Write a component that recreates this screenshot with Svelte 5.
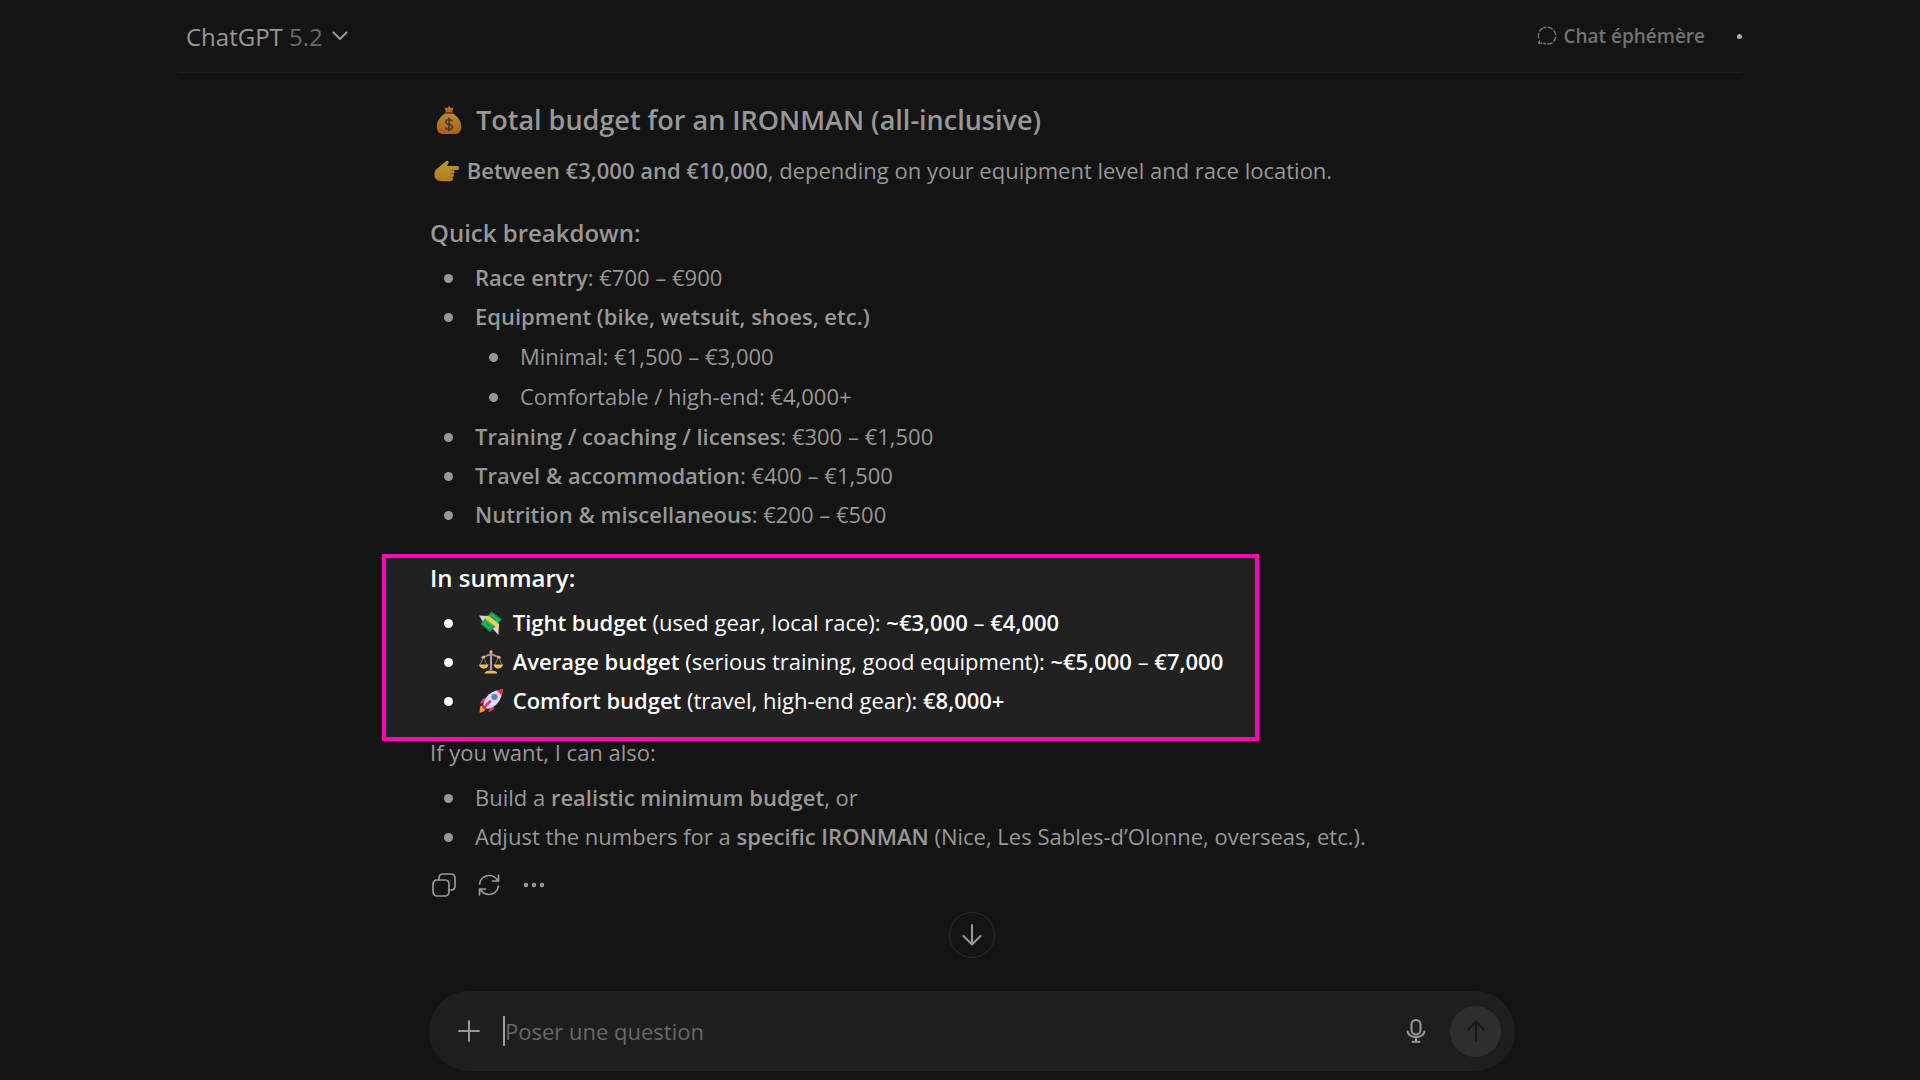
<script>
  const breakdown = [
    { label: "Race entry", value: "€700 – €900" },
    {
      label: "Equipment (bike, wetsuit, shoes, etc.)",
      items: ["Minimal: €1,500 – €3,000", "Comfortable / high-end: €4,000+"],
    },
    { label: "Training / coaching / licenses", value: "€300 – €1,500" },
    { label: "Travel & accommodation", value: "€400 – €1,500" },
    { label: "Nutrition & miscellaneous", value: "€200 – €500" },
  ];

  const summary = [
    { icon: "money", label: "Tight budget", note: "(used gear, local race)", from: "~€3,000", to: "€4,000" },
    { icon: "scales", label: "Average budget", note: "(serious training, good equipment)", from: "~€5,000", to: "€7,000" },
    { icon: "rocket", label: "Comfort budget", note: "(travel, high-end gear)", from: "€8,000+" },
  ];

  let question = "";
</script>

<div class="page">
  <header>
    <button class="model">
      <span>ChatGPT <span class="version">5.2</span></span>
      <svg width="16" height="10" viewBox="0 0 16 10" class="line"><path d="M1.500 1.500 8 8l6.500-6.500" /></svg>
    </button>
    <button class="temporary">
      <svg width="20" height="20" viewBox="0 0 20 20" class="line">
        <path d="M7 1.700 8.800 1.200M11.200 1.200Q13.500 1.500 15.200 2.900M17 4.800Q18.300 6.500 18.500 8.500M18.500 11.200Q18.200 13.500 17 15M15 16.800Q13 18 11 18M8.500 17.900 6.800 17.300M4.700 17 1.800 17.300 2.600 15M1.600 11.700Q1.100 9.500 1.600 7.500M2.700 5Q3.800 3.300 5.300 2.500" />
      </svg>
      Chat éphémère
    </button>
    <button class="more" aria-label="Options"><span class="dot"></span></button>
  </header>

  <main>
    <h2>
      <svg class="bag" width="26" height="30" viewBox="0 0 26 30" aria-hidden="true">
        <defs>
          <linearGradient id="bag" x2="0" y2="1"><stop stop-color="#b68f2b" /><stop offset="1" stop-color="#ae5d1c" /></linearGradient>
        </defs>
        <path d="M8.500 2.500 11.500 3 13 .5 14.500 3l3-.5-1.500 5h-6z" fill="#b3681f" />
        <path d="M9 8.500C5 11 .8 15.500.8 21.500.8 27 3.500 29 7 29h12c3.500 0 6.200-2 6.200-7.500C25.200 15.500 21 11 17 8.500z" fill="url(#bag)" />
        <path d="M9.500 8h7" stroke="#8e3e21" stroke-width="1.500" stroke-linecap="round" />
        <path d="M16.300 16.500C15.600 15 14.400 14.500 13 14.500c-2 0-3.200 1-3.200 2.500 0 3.500 6.600 1.600 6.600 5 0 1.600-1.500 2.500-3.400 2.500-1.700 0-3-.7-3.500-2.100M13 12.500v14" fill="none" stroke="#51382b" stroke-width="1.700" />
      </svg>
      Total budget for an IRONMAN (all-inclusive)
    </h2>
    <p class="range">
      <svg class="hand" width="26" height="22" viewBox="0 0 26 22" aria-hidden="true">
        <defs>
          <linearGradient id="hand" x2="0" y2="1"><stop stop-color="#b89a2c" /><stop offset="1" stop-color="#b57a25" /></linearGradient>
        </defs>
        <path d="M2.500 9 12 1.200c1.700-1.300 3.500.7 2.300 2.300L12.500 6H23c2.800 0 2.800 4 0 4h-3.500c1.500.7 1.300 3.300-.5 3.700 1.300.9 1 3.200-.6 3.700 1.200 1.400.3 3.800-1.700 3.800H8C2 21 0 17.500.5 13.500.8 11.500 1.500 10 2.500 9z" fill="url(#hand)" />
        <path d="M20 10h-4M19 13.800h-3M18.300 17.500h-2.500" stroke="#96611c" fill="none" />
      </svg>
      <strong>Between €3,000 and €10,000</strong>, depending on your equipment level and race location.
    </p>

    <h3>Quick breakdown:</h3>
    <ul>
      {#each breakdown as row}
        <li>
          <strong>{row.label}</strong>{#if row.value}: {row.value}{/if}
          {#if row.items}
            <ul class="nested">
              {#each row.items as item}
                <li>{item}</li>
              {/each}
            </ul>
          {/if}
        </li>
      {/each}
    </ul>

    <section class="summary">
      <h3>In summary:</h3>
      <ul>
        {#each summary as row}
          <li>
            <svg class="emoji" width="24" height="24" viewBox="0 0 24 24" aria-hidden="true">
              {#if row.icon === "money"}
                <path d="M0 4.500 10 5 4 11z" fill="#d0cdd6" />
                <path d="M13 17 20 12.500 19.500 24z" fill="#d9d6de" />
                <path d="M1.500 13 12.500.5 23 8.500 11 21z" fill="#129a50" />
                <path d="M3.800 12.800 12.700 2.700 20.800 8.700 11 18.700z" fill="#26bd6e" />
                <path d="m6.500 11.500 5.500 4.500M12 5l5.500 4" stroke="#18a05a" stroke-width="2.500" />
                <path d="m5.500 7 3.500-2.500L20 13l-1 4.500z" fill="#f3cf42" />
              {:else if row.icon === "scales"}
                <path d="M2 7.500C6 8 7 4.500 12 4.500S18 8 22 7.500" fill="none" stroke="#9c8ba7" stroke-width="1.800" />
                <path d="M12 2v18" stroke="#a899af" stroke-width="2.200" />
                <path d="M4.500 7 1 15M4.500 7 8 15M19.500 7 16 15M19.500 7 23 15" stroke="#8a7899" />
                <path d="M0 14.500h9.500C9 20 .5 20 0 14.500zM14.500 14.500H24c-.5 5.500-9 5.500-9.500 0zM5.500 23.500q.5-3 6.500-3t6.500 3z" fill="#f3bd49" />
                <circle cx="12" cy="2" r="1.700" fill="#efb84b" />
                <circle cx="4.500" cy="7" r="1.500" fill="#efb84b" />
                <circle cx="19.500" cy="7" r="1.500" fill="#efb84b" />
              {:else}
                <path d="M9 8 4 9.500.5 14.500l6-.5zM15.500 14.500 14.500 20.500 9.500 23.500l1-7z" fill="#e0397a" />
                <path d="M1 17.500Q4 15.500 6 18.500C8 21 4 23.500.5 23.500z" fill="#ff9838" />
                <path d="M4 16.500C6 7 12 1.500 23.500.5 23 12 17 18 8 20z" fill="#e6daee" />
                <path d="M17 1.800 23.800 0 22.300 7.200C21.500 4.800 19.500 2.800 17 1.800z" fill="#ee2c66" />
                <path d="m3.500 15 5 5-3 .5-2.500-2.500z" fill="#c52967" />
                <path d="m6.500 17 4.500-4.500" stroke="#e5316f" stroke-width="2.500" stroke-linecap="round" />
                <circle cx="15.500" cy="8" r="2.800" fill="#3988d0" stroke="#8d83ab" />
              {/if}
            </svg>
            <strong>{row.label}</strong> {row.note}: <strong>{row.from}</strong>
            {#if row.to}– <strong>{row.to}</strong>{/if}
          </li>
        {/each}
      </ul>
    </section>

    <p class="offer">If you want, I can also:</p>
    <ul class="offers">
      <li>Build a <strong>realistic minimum budget</strong>, or</li>
      <li>Adjust the numbers for a <strong>specific IRONMAN</strong> (Nice, Les Sables-d’Olonne, overseas, etc.).</li>
    </ul>

    <div class="actions">
      <button aria-label="Copier">
        <svg width="24" height="24" viewBox="0 0 24 24" class="line">
          <rect x="1" y="7" width="16" height="16" rx="4" />
          <path d="M7 7V5q0-4 4-4h8q4 0 4 4v8q0 4-4 4h-2" />
        </svg>
      </button>
      <button aria-label="Régénérer">
        <svg width="24" height="24" viewBox="0 0 24 24" class="line">
          <path d="M2.500 11C3.500 5.500 7.500 2.500 12 2.500c4 0 7 2.200 9 5.500M21.500 2v6h-6M21.500 13c-1 5.500-5 8.500-9.500 8.500-4 0-7-2.200-9-5.500M2.500 22v-6h6" />
        </svg>
      </button>
      <button aria-label="Plus">
        <svg width="24" height="24" viewBox="0 0 24 24" fill="currentColor">
          <circle cx="4" cy="12" r="2.200" /><circle cx="12" cy="12" r="2.200" /><circle cx="20" cy="12" r="2.200" />
        </svg>
      </button>
    </div>
  </main>

  <footer>
    <button class="scroll" aria-label="Défiler vers le bas">
      <svg width="20" height="22" viewBox="0 0 20 22" class="line"><path d="M10 1v19M1.500 12 10 20.500l8.500-8.500" /></svg>
    </button>
    <form class="composer" on:submit|preventDefault>
      <button type="button" class="plus" aria-label="Ajouter">
        <svg width="22" height="22" viewBox="0 0 22 22" class="line"><path d="M11 1v20M1 11h20" /></svg>
      </button>
      <span class="caret"></span>
      <input type="text" placeholder="Poser une question" aria-label="Poser une question" bind:value={question} />
      <button type="button" class="mic" aria-label="Dicter">
        <svg width="20" height="24" viewBox="0 0 20 24" class="line">
          <rect x="5.500" y="1" width="9" height="14.500" rx="4.500" />
          <path d="M1.500 12.500C3 20 17 20 18.500 12.500M10 18v4.500M6.500 22.700h7" />
        </svg>
      </button>
      <button class="send" aria-label="Envoyer">
        <svg width="18" height="22" viewBox="0 0 18 22" class="line"><path d="M9 21V2M1 10l8-8.500 8 8.500" /></svg>
      </button>
    </form>
  </footer>
</div>

<style>
  :global(body) {
    margin: 0;
    background: #141414;
  }

  .page {
    box-sizing: border-box;
    display: flex;
    flex-direction: column;
    min-height: 100vh;
    width: 100%;
    max-width: 1564px;
    margin: 0 auto;
    color: #989898;
    font-family: "Open Sans", "Noto Sans", sans-serif;
    font-size: 22px;
  }

  button {
    display: flex;
    align-items: center;
    justify-content: center;
    padding: 0;
    border: 0;
    background: none;
    color: inherit;
    font: inherit;
  }

  svg {
    flex: none;
  }

  .line {
    fill: none;
    stroke: currentColor;
    stroke-width: 2;
    stroke-linecap: round;
    stroke-linejoin: round;
  }

  header {
    display: flex;
    align-items: center;
    height: 72px;
    padding-left: 8px;
    border-bottom: 1px solid #1c1c1c;
  }

  .model {
    gap: 9px;
    margin-right: auto;
    font-size: 24px;
  }

  .version {
    color: #6b6b6b;
  }

  .temporary {
    gap: 6px;
    color: #737373;
    font-size: 19px;
    font-weight: 600;
  }

  .temporary svg {
    stroke-width: 1.5;
  }

  .more {
    width: 37px;
    height: 36px;
    justify-content: flex-end;
  }

  .dot {
    width: 5px;
    height: 5px;
    border-radius: 50%;
    background: #aaa;
  }

  main {
    padding: 27px 0 0 252px;
  }

  h2,
  h3,
  p,
  ul {
    margin: 0;
    padding: 0;
  }

  h2,
  h3,
  strong {
    font-weight: 600;
  }

  h2 {
    display: flex;
    align-items: center;
    gap: 14px;
    padding-left: 6px;
    font-size: 27px;
    line-height: 40px;
  }

  h3 {
    font-size: 24px;
    line-height: 40px;
  }

  .range {
    margin: 10px 0 23px;
    line-height: 40px;
  }

  .hand {
    margin: 0 1px 0 4px;
    vertical-align: -3px;
  }

  ul {
    margin-top: 5px;
    padding-left: 45px;
    list-style: none;
    line-height: 39px;
  }

  li::before {
    content: "";
    display: inline-block;
    width: 9px;
    height: 9px;
    margin: 0 22px 0 -31px;
    border-radius: 50%;
    background: currentColor;
    vertical-align: 3px;
  }

  .nested {
    display: grid;
    gap: 1px;
    margin: 0;
    padding-top: 1px;
    padding-bottom: 1px;
  }

  .summary {
    box-sizing: border-box;
    width: fit-content;
    margin: 20px 0 0 -48px;
    padding: 0 32px 17px 44px;
    border: 4px solid #f60ab8;
    background: #212121;
    color: #fff;
  }

  .emoji {
    margin: 0 4px;
    vertical-align: -4px;
  }

  .offer {
    line-height: 22px;
  }

  .offers {
    margin-top: 15px;
  }

  .actions {
    display: flex;
    gap: 21px;
    margin-top: 17px;
    padding-left: 2px;
  }

  .actions .line {
    stroke-width: 1.7;
  }

  footer {
    position: sticky;
    bottom: 0;
    display: flex;
    flex-direction: column;
    align-items: center;
    gap: 33px;
    margin-top: auto;
    padding: 0 227px 9px 251px;
  }

  .scroll {
    box-sizing: border-box;
    width: 46px;
    height: 46px;
    border: 1px solid #2a2a2a;
    border-radius: 50%;
    background: #141414;
  }

  .composer {
    box-sizing: border-box;
    display: flex;
    align-items: center;
    width: 100%;
    height: 80px;
    padding: 0 14px 0 29px;
    border-radius: 40px;
    background: #1e1e1e;
  }

  .caret {
    width: 2px;
    height: 30px;
    margin-left: 23px;
    background: #a0a0a0;
  }

  input {
    flex: 1;
    min-width: 0;
    padding: 0;
    border: 0;
    outline: 0;
    background: none;
    color: inherit;
    font: inherit;
  }

  input::placeholder {
    color: #686868;
    opacity: 1;
  }

  .mic {
    margin-right: 24px;
  }

  .send {
    width: 51px;
    height: 51px;
    border-radius: 50%;
    background: #2e2e2e;
    color: #181818;
  }
</style>
